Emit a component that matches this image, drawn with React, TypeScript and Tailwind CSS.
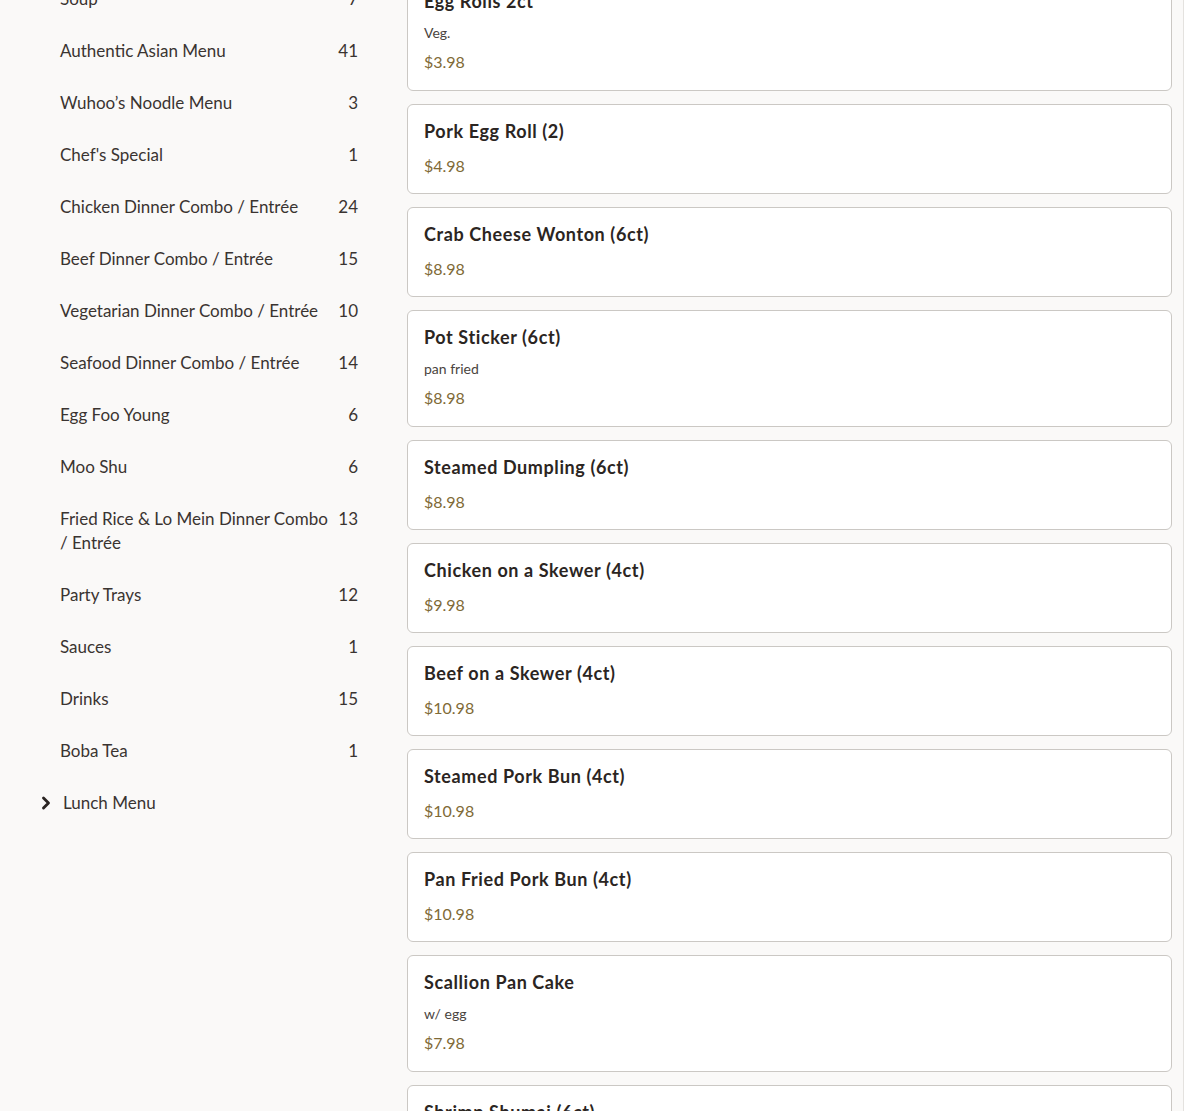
import { ChevronRight } from 'lucide-react';

const categories = [
  { name: 'Soup', count: 7 },
  { name: 'Authentic Asian Menu', count: 41 },
  { name: 'Wuhoo’s Noodle Menu', count: 3 },
  { name: "Chef's Special", count: 1 },
  { name: 'Chicken Dinner Combo / Entrée', count: 24 },
  { name: 'Beef Dinner Combo / Entrée', count: 15 },
  { name: 'Vegetarian Dinner Combo / Entrée', count: 10 },
  { name: 'Seafood Dinner Combo / Entrée', count: 14 },
  { name: 'Egg Foo Young', count: 6 },
  { name: 'Moo Shu', count: 6 },
  { name: 'Fried Rice & Lo Mein Dinner Combo / Entrée', count: 13 },
  { name: 'Party Trays', count: 12 },
  { name: 'Sauces', count: 1 },
  { name: 'Drinks', count: 15 },
  { name: 'Boba Tea', count: 1 },
];

const items: { name: string; desc?: string; price: string }[] = [
  { name: 'Egg Rolls 2ct', desc: 'Veg.', price: '$3.98' },
  { name: 'Pork Egg Roll (2)', price: '$4.98' },
  { name: 'Crab Cheese Wonton (6ct)', price: '$8.98' },
  { name: 'Pot Sticker (6ct)', desc: 'pan fried', price: '$8.98' },
  { name: 'Steamed Dumpling (6ct)', price: '$8.98' },
  { name: 'Chicken on a Skewer (4ct)', price: '$9.98' },
  { name: 'Beef on a Skewer (4ct)', price: '$10.98' },
  { name: 'Steamed Pork Bun (4ct)', price: '$10.98' },
  { name: 'Pan Fried Pork Bun (4ct)', price: '$10.98' },
  { name: 'Scallion Pan Cake', desc: 'w/ egg', price: '$7.98' },
  { name: 'Shrimp Shumai (6ct)', price: '$8.98' },
];

export default function App() {
  return (
    <div
      className="h-[1111px] overflow-hidden bg-[#faf9f8] text-[#2e2926] flex"
      style={{ fontFamily: 'Lato, "Open Sans", sans-serif' }}
    >
      {/* Category sidebar */}
      <aside className="w-[383px] shrink-0">
        <ul className="mt-[-27px]">
          {categories.map((c) => (
            <li
              key={c.name}
              className="flex items-start justify-between gap-2 pl-[60px] pr-[25px] py-[14px] text-[17px] leading-[24px] text-[#3a3431]"
            >
              <span>{c.name}</span>
              <span className="shrink-0">{c.count}</span>
            </li>
          ))}
          <li className="flex items-center gap-[7px] pl-[36px] py-[14px] text-[17px] leading-[24px] text-[#3a3431]">
            <ChevronRight size={20} strokeWidth={3.4} className="text-[#2a2422]" />
            <span>Lunch Menu</span>
          </li>
        </ul>
      </aside>

      {/* Item cards */}
      <main className="ml-[24px] w-[765px] shrink-0">
        <div className="mt-[-26px] flex flex-col gap-[13px]">
          {items.map((it) => (
            <div
              key={it.name}
              className="bg-white border border-[#cbc8c4] rounded-[6px] pl-[16px] pr-4 pt-[14px] pb-[15px]"
            >
              <h3 className="text-[18px] leading-[24px] font-bold tracking-[0.6px] text-[#2b2522]">{it.name}</h3>
              {it.desc && (
                <p className="mt-[10px] text-[14px] leading-[20px] text-[#4a4440]">{it.desc}</p>
              )}
              <p
                className={`${it.desc ? 'mt-[7px] pb-px' : 'mt-[11px]'} text-[16px] leading-[24px] text-[#806a36]`}
              >
                {it.price}
              </p>
            </div>
          ))}
        </div>
      </main>

      <div className="ml-[11px] flex-1 border-l border-[#e4e2df] bg-white" />
    </div>
  );
}
